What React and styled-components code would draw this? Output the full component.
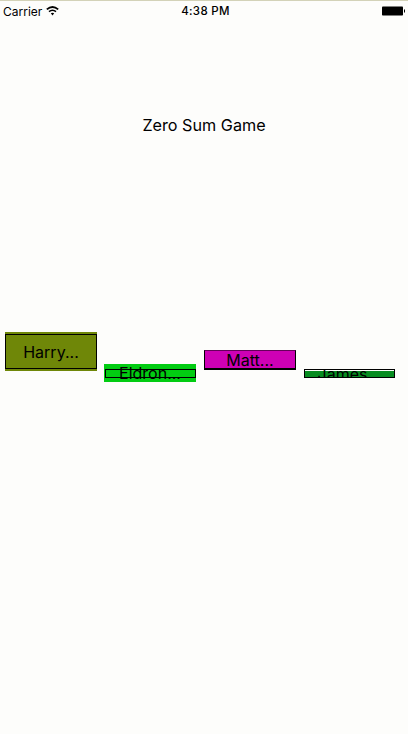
import React from 'react';
import styled, { createGlobalStyle } from 'styled-components';

const GlobalStyle = createGlobalStyle`
  body {
    margin: 0;
    background: #fdfdfb;
    color: #000;
    font-family: Inter, "Liberation Sans", sans-serif;
  }
`;

const Screen = styled.main`
  display: flex;
  flex-direction: column;
  width: 408px;
  height: 734px;
  box-sizing: border-box;
  border-top: 1px solid #d3d2b8;
  overflow: hidden;
`;

const StatusBar = styled.header`
  display: grid;
  grid-template-columns: 1fr auto 1fr;
  align-items: center;
  height: 21px;
  padding: 0 3px;
  font-size: 12px;
  line-height: 21px;
`;

const Carrier = styled.div`
  display: flex;
  align-items: center;
  gap: 4px;
`;

const WifiIcon = styled.svg`
  width: 13px;
  height: 10px;
  margin-top: -1px;
`;

const Clock = styled.time`
  font-weight: 550;
  font-size: 11.5px;
  letter-spacing: 0.3px;
  padding-left: 3px;
`;

const BatteryIcon = styled.svg`
  width: 24px;
  height: 10px;
  margin-top: -2px;
  justify-self: end;
`;

const Title = styled.h1`
  margin: 93px 0 0;
  height: 20px;
  font-size: 16.2px;
  font-weight: 400;
  line-height: 20px;
  text-align: center;
`;

const Players = styled.section`
  display: grid;
  grid-template-columns: repeat(4, 92px);
  column-gap: 7.6px;
  align-items: start;
  margin: 197px 0 0 5px;
`;

const Bar = styled.div`
  position: relative;
  display: flex;
  align-items: center;
  justify-content: center;
  width: ${({ $width }) => $width ?? 92}px;
  height: ${({ $height }) => $height}px;
  margin-top: ${({ $drop }) => $drop}px;
  margin-left: ${({ $shift }) => $shift ?? 0}px;
  background: ${({ $color }) => $color};
`;

const Outline = styled.span`
  position: absolute;
  inset: ${({ $inset }) => $inset};
  border: 1px solid #000;
  border-top-color: ${({ $topColor }) => $topColor ?? '#000'};
  border-bottom-width: ${({ $bottom }) => $bottom ?? 1}px;
`;

const Name = styled.span`
  display: flex;
  align-items: center;
  justify-content: center;
  height: ${({ $clip }) => ($clip ? '100%' : 'auto')};
  overflow: ${({ $clip }) => ($clip ? 'hidden' : 'visible')};
  font-size: 16px;
  line-height: 20px;
  z-index: 1;
`;

const players = [
  { name: 'Harry...', color: '#6f8708', height: 39, drop: 0, inset: '2px 0 2px 0' },
  { name: 'Eldron...', color: '#02cc12', height: 18, drop: 32, shift: -0.6, inset: '5px 0 4px 1px' },
  { name: 'Matt...', color: '#ce00b5', height: 20, drop: 18, shift: -0.2, inset: '0', topColor: '#65005a', bottom: 2 },
  {
    name: 'James...',
    color: 'linear-gradient(#fdfdfb 1px, #078c20 1px)',
    height: 8,
    drop: 38,
    width: 91,
    shift: 0.2,
    inset: '-1px 0 0 0',
    clip: true,
  },
];

export default function App() {
  return (
    <>
      <GlobalStyle />
      <Screen>
        <StatusBar>
          <Carrier>
            Carrier
            <WifiIcon viewBox="0 0 13 10" fill="none" stroke="#000">
              <path d="M.8 3.4Q6.5-1.4 12.2 3.4" strokeWidth="1.8" />
              <path d="M3 5.7Q6.5 2.8 10 5.7" strokeWidth="1.6" />
              <path d="M4.8 7.3Q6.5 6 8.2 7.3L6.5 9.4Z" fill="#000" stroke="none" />
            </WifiIcon>
          </Carrier>
          <Clock>4:38 PM</Clock>
          <BatteryIcon viewBox="0 0 24 10">
            <rect x="1" y="0.5" width="21" height="9" rx="0.8" />
            <rect x="23" y="3.5" width="1" height="3" />
          </BatteryIcon>
        </StatusBar>
        <Title>Zero Sum Game</Title>
        <Players>
          {players.map((p) => (
            <Bar key={p.name} $color={p.color} $height={p.height} $drop={p.drop} $width={p.width} $shift={p.shift}>
              <Outline $inset={p.inset} $topColor={p.topColor} $bottom={p.bottom} />
              <Name $clip={p.clip}>{p.name}</Name>
            </Bar>
          ))}
        </Players>
      </Screen>
    </>
  );
}
